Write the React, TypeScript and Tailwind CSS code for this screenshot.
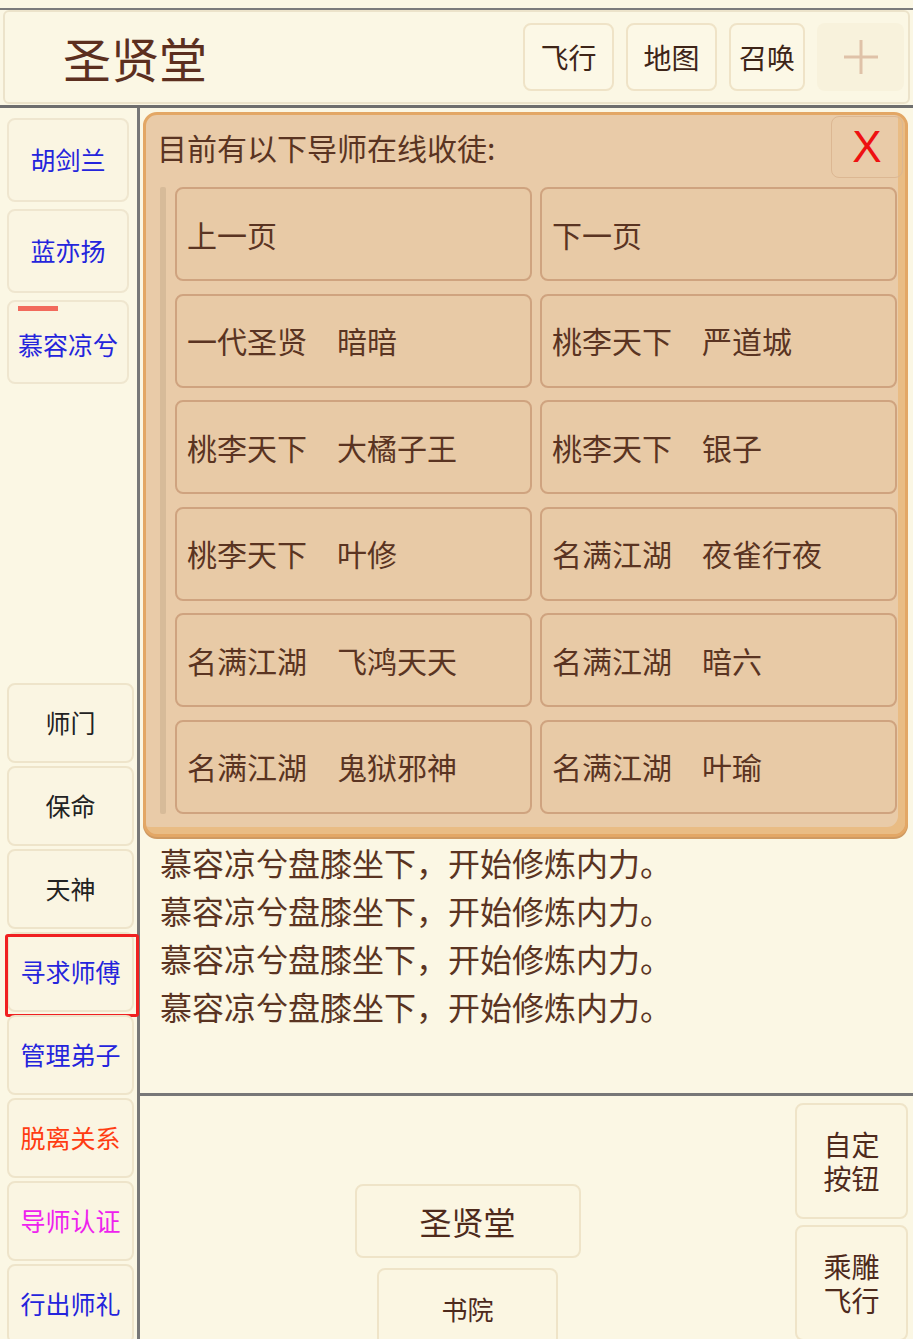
import React from 'react';

const font = { fontFamily: '"Noto Sans CJK SC", "Noto Sans", sans-serif' };

const mentors: string[] = [
  '上一页',
  '下一页',
  '一代圣贤\u3000暗暗',
  '桃李天下\u3000严道城',
  '桃李天下\u3000大橘子王',
  '桃李天下\u3000银子',
  '桃李天下\u3000叶修',
  '名满江湖\u3000夜雀行夜',
  '名满江湖\u3000飞鸿天天',
  '名满江湖\u3000暗六',
  '名满江湖\u3000鬼狱邪神',
  '名满江湖\u3000叶瑜',
];

const lowerMenu = [
  { label: '师门', color: 'text-[#222222]' },
  { label: '保命', color: 'text-[#222222]' },
  { label: '天神', color: 'text-[#222222]' },
  { label: '寻求师傅', color: 'text-[#2424dc]', active: true },
  { label: '管理弟子', color: 'text-[#2424dc]' },
  { label: '脱离关系', color: 'text-[#ff3c12]' },
  { label: '导师认证', color: 'text-[#ee22ee]' },
  { label: '行出师礼', color: 'text-[#2424dc]' },
];

const logLines = Array(4).fill('慕容凉兮盘膝坐下，开始修炼内力。');

export default function App() {
  return (
    <div className="w-[913px] h-[1339px] overflow-hidden bg-[#fbf7e4] flex flex-col" style={font}>
      <div className="h-[8px] shrink-0" />
      <div className="h-[2px] bg-[#7b7b7b] shrink-0" />

      {/* Header */}
      <div className="mx-[3px] h-[94px] shrink-0 border-2 border-[#ece3ca] rounded-[6px] flex items-center pr-[4px]">
        <div className="pl-[58px] text-[48px] leading-none text-[#5c2f1f]">圣贤堂</div>
        <div className="ml-auto flex gap-[12px]">
          <button className="w-[91px] h-[68px] rounded-[8px] border-2 border-[#efe3c7] bg-[#fcf8e6] text-[28px] text-[#3e2518]">飞行</button>
          <button className="w-[91px] h-[68px] rounded-[8px] border-2 border-[#efe3c7] bg-[#fcf8e6] text-[28px] text-[#3e2518]">地图</button>
          <button className="w-[76px] h-[68px] rounded-[8px] border-2 border-[#efe3c7] bg-[#fcf8e6] text-[28px] text-[#3e2518]">召唤</button>
          <button className="w-[87px] h-[68px] rounded-[8px] bg-[#f8f2dc] flex items-center justify-center">
            <svg width="38" height="38" viewBox="0 0 38 38">
              <path d="M19 2v34M2 19h34" stroke="#dfc2a8" strokeWidth="3" />
            </svg>
          </button>
        </div>
      </div>
      <div className="h-[3px] bg-[#6e6e6e] shrink-0 mt-[1px]" />

      {/* Main */}
      <div className="flex flex-1 min-h-0">
        {/* Sidebar */}
        <div className="w-[140px] shrink-0 border-r-[3px] border-[#777777] pl-[7px]">
          <div className="mt-[10px] flex flex-col gap-[7px]">
            <button className="w-[122px] h-[84px] rounded-[8px] border-2 border-[#efe6cf] bg-[#faf5e2] text-[25px] text-[#2424dc]">胡剑兰</button>
            <button className="w-[122px] h-[84px] rounded-[8px] border-2 border-[#efe6cf] bg-[#faf5e2] text-[25px] text-[#2424dc]">蓝亦扬</button>
            <button className="relative w-[122px] h-[84px] rounded-[8px] border-2 border-[#efe6cf] bg-[#faf5e2] text-[25px] text-[#2424dc] pt-[6px]">
              <span className="absolute left-[9px] top-[4px] w-[40px] h-[5px] bg-[#f26a5c]" />
              慕容凉兮
            </button>
          </div>
          <div className="mt-[299px] flex flex-col gap-[3px]">
            {lowerMenu.map((m) => (
              <div key={m.label} className="relative">
                <button className={`w-[127px] h-[80px] rounded-[8px] border-2 border-[#eee4ca] bg-[#faf5e2] text-[25px] ${m.color}`}>
                  {m.label}
                </button>
                {m.active && (
                  <span className="absolute left-[-2px] top-[2px] w-[134px] h-[83px] border-[3px] border-[#f02020] rounded-[3px] pointer-events-none" />
                )}
              </div>
            ))}
          </div>
        </div>

        {/* Content */}
        <div className="flex-1 flex flex-col min-w-0">
          <div className="relative h-[985px] shrink-0 overflow-hidden flex flex-col justify-end pb-[63px] pl-[20px]">
            {logLines.map((l, i) => (
              <div key={i} className="text-[32px] leading-[48px] text-[#5a3422] whitespace-nowrap">{l}</div>
            ))}

            {/* Mentor dialog */}
            <div className="absolute left-[3px] top-[4px] w-[765px] h-[725px] rounded-[14px] border-[3px] border-[#e3a765] bg-[#e9cba8] shadow-[inset_-7px_-7px_0_#e9bc84,0_2px_0_#cf9a62]">
              <div className="pl-[11px] pt-[11px] text-[30px] leading-[42px] text-[#5a3422]">目前有以下导师在线收徒:</div>
              <button className="absolute right-[2px] top-[1px] w-[72px] h-[62px] rounded-[8px] border border-[#dcb792] flex items-center justify-center text-[44px] leading-none text-[#ee1111]" style={{ fontFamily: '"Liberation Sans", sans-serif' }}>
                X
              </button>
              <div className="flex mt-[19px]">
                <div className="w-[6px] h-[627px] ml-[14px] bg-[#d7bb99] rounded-[2px]" />
                <div className="ml-[9px] w-[722px] grid grid-cols-2 gap-x-[8px] gap-y-[12.6px]">
                  {mentors.map((m) => (
                    <button key={m} className="h-[94px] rounded-[8px] border-2 border-[#cfa37f] bg-[#e8caa6] text-left pl-[10px] text-[30px] text-[#5a3422] whitespace-pre">
                      {m}
                    </button>
                  ))}
                </div>
              </div>
            </div>
          </div>

          <div className="h-[3px] bg-[#777777] shrink-0" />

          {/* Bottom controls */}
          <div className="flex flex-1">
            <div className="flex-1 flex flex-col items-center pt-[88px] gap-[10px]">
              <button className="w-[226px] h-[74px] rounded-[8px] border-2 border-[#efe4c8] bg-[#fbf6e2] text-[32px] text-[#4e2a1c]">圣贤堂</button>
              <button className="w-[181px] h-[80px] rounded-[8px] border-2 border-[#efe4c8] bg-[#fbf6e2] text-[26px] text-[#4e2a1c]">书院</button>
            </div>
            <div className="w-[113px] mr-[5px] pt-[7px] flex flex-col gap-[6px]">
              <button className="h-[116px] rounded-[8px] border-2 border-[#efe4c8] bg-[#fbf6e2] text-[28px] text-[#4e2a1c] flex flex-col items-center justify-center">
                <span className="block leading-[34px]">自定</span>
                <span className="block leading-[34px]">按钮</span>
              </button>
              <button className="h-[116px] rounded-[8px] border-2 border-[#efe4c8] bg-[#fbf6e2] text-[28px] text-[#4e2a1c] flex flex-col items-center justify-center">
                <span className="block leading-[34px]">乘雕</span>
                <span className="block leading-[34px]">飞行</span>
              </button>
            </div>
          </div>
        </div>
      </div>
    </div>
  );
}
